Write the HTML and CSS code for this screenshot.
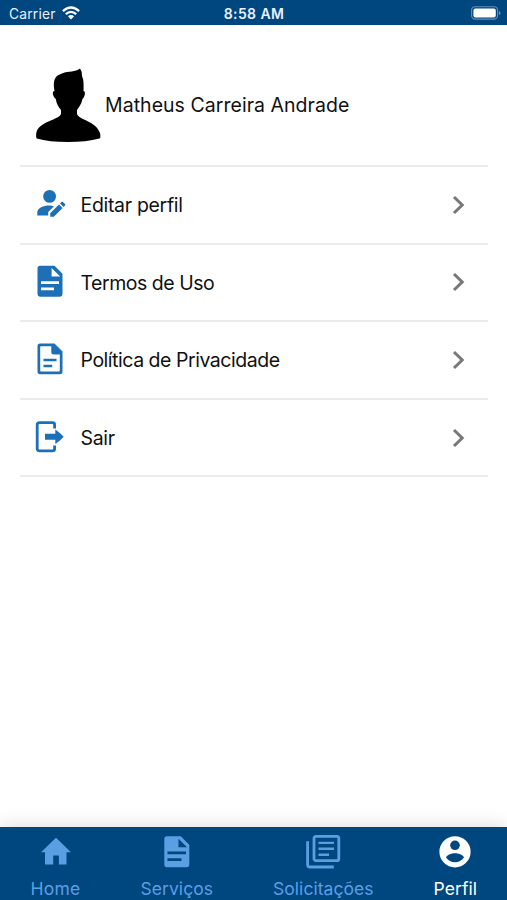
FILE: index.html
```html
<!DOCTYPE html>
<html lang="pt-BR">
<head>
<meta charset="utf-8">
<title>Perfil</title>
<link rel="stylesheet" href="styles.css">
</head>
<body>
<div class="app">
  <header class="status">
    <div class="carrier"><span>Carrier</span>
      <svg width="18" height="14" viewBox="0 0 18 14"><g fill="none" stroke="#fff" stroke-width="2.3"><path d="M.9 5.1Q9-2.2 17.1 5.1M3.8 8.2Q9 3.5 14.2 8.2"/></g><path fill="#fff" d="M5.9 10.2Q9 7.7 12.1 10.2L9 13.6z"/></svg>
    </div>
    <time class="clock">8:58 AM</time>
    <svg class="battery" width="30" height="14" viewBox="0 0 30 14"><rect x=".6" y=".7" width="26" height="12.4" rx="3.6" fill="none" stroke="#6590b5" stroke-width="1.1"/><rect x="2.4" y="2.4" width="22.4" height="9" rx="2" fill="#fff"/><path d="M28 4.7q3.2 2.3 0 4.6z" fill="#6590b5"/></svg>
  </header>
  <main class="content">
    <section class="profile">
      <svg class="avatar" width="66" height="76" viewBox="0 0 66 76"><path d="M19.500 24C17.500 13 20 8.500 27 6.500C34 3.500 40 5.500 45 1.500Q47.500 5 47 9C49 13 48.700 18 48.500 24C51 24 50 30 47.500 32C46.500 37 44 40 42 43V47C44 53 61 54 65 66Q66 71 64.500 71.500Q51 75 33 75Q14 75 1.800 71.500Q.5 70 1.500 65C5 54 24 53 26 47V43C23.500 40 21.500 37 20.800 32C18 30 16.500 24 19.500 24Z"/></svg>
      <h1 class="name">Matheus Carreira Andrade</h1>
    </section>
    <nav class="menu">
      <a class="row">
        <svg class="icon" viewBox="0 0 32 32"><circle cx="15.600" cy="8.400" r="6.400"/><path d="M3.300 27.500V24.300C3.300 20 9.500 17.500 15.500 17.500Q18 17.500 20 18.200L14.200 24V27.500zM16.200 28.800V25.200L25 16.400L28.600 20L19.800 28.800zM26 15.400L27.400 14Q28.200 13.200 29 14L31 16Q31.800 16.800 31 17.600L29.600 19z"/></svg>
        <span class="label">Editar perfil</span>
        <svg class="chevron" viewBox="0 0 14 20"><path d="M2 2L10.200 10L2 18"/></svg>
      </a>
      <a class="row">
        <svg class="icon" viewBox="0 0 32 32"><path fill-rule="evenodd" d="M6 -.3H20.500L28.500 7.700V27.700Q28.500 30.700 25.500 30.700H6.500Q3.500 30.700 3.500 27.700V2.200Q3.500 -.3 6 -.3zM17.600 1.900V10.400H26.200zM7 15.200V18H25V15.200zM7 21.500V24.300H20V21.500z"/></svg>
        <span class="label tight">Termos de Uso</span>
        <svg class="chevron" viewBox="0 0 14 20"><path d="M2 2L10.200 10L2 18"/></svg>
      </a>
      <a class="row">
        <svg class="icon" viewBox="0 0 32 32"><path fill-rule="evenodd" d="M6 .5H20.500L28.500 8.500V28.500Q28.500 31.200 26 31.200H6Q3.500 31.200 3.500 28.500V3Q3.500 .5 6 .5zM7 3.200Q6.200 3.200 6.200 4V27.500Q6.200 28.500 7 28.500H25Q25.800 28.500 25.800 27.500V11.500H20Q17.300 11.500 17.300 9V3.200z"/><path d="M9.500 15.700H22.500V18.300H9.500zM9.500 21.700H18.200V24.300H9.500z"/></svg>
        <span class="label tight">Política de Privacidade</span>
        <svg class="chevron" viewBox="0 0 14 20"><path d="M2 2L10.200 10L2 18"/></svg>
      </a>
      <a class="row">
        <svg class="icon" viewBox="0 0 32 32"><path d="M20.600 7.500V3.500Q20.600 1.700 18.500 1.700H5.500Q3.200 1.700 3.200 4V27.500Q3.200 29.800 5.500 29.800H18.500Q20.600 29.800 20.600 28V24.500" fill="none" stroke="#1d70b5" stroke-width="2.800"/><path d="M11 12.800H21.300V8.600Q26 11.800 29.700 15.800Q26 20 21.300 23V18.700H11z"/></svg>
        <span class="label">Sair</span>
        <svg class="chevron" viewBox="0 0 14 20"><path d="M2 2L10.200 10L2 18"/></svg>
      </a>
    </nav>
  </main>
  <nav class="tabs">
    <a class="tab home"><svg viewBox="0 0 36 36"><path d="M18 3.800L33 18.200H28.500V30.400H20.900V21.500H15.200V30.400H7V18.200H3z"/></svg><span>Home</span></a>
    <a class="tab services"><svg viewBox="0 0 36 36"><path fill-rule="evenodd" d="M8 2.200H21.800L30.300 10.700V30.500Q30.300 33.200 27.600 33.200H8Q5.300 33.200 5.300 30.500V5Q5.300 2.200 8 2.200zM19.500 4.700V13.200H28zM8.500 17.500V20.300H27V17.500zM8.500 24.300V27.100H22.500V24.300z"/></svg><span>Serviços</span></a>
    <a class="tab requests"><svg viewBox="0 0 36 36"><g fill="none" stroke="#5b9fe3" stroke-width="2.800"><rect x="9" y="2.300" width="24.800" height="24.400" rx="2"/><path d="M2.600 7.200V30.500Q2.600 33 5 33H28.800"/><path stroke-width="2.400" d="M13.500 8.900H29M13.500 14.800H29M13.500 20.700H24"/></g></svg><span>Solicitações</span></a>
    <a class="tab active"><svg viewBox="0 0 36 36"><circle cx="18" cy="17.800" r="15.600"/><g fill="#00467f"><circle cx="18" cy="11.300" r="4.800"/><path d="M9 23.200C10.500 20.500 15 19.300 18 19.300S25.500 20.500 27 23.200C25 26.500 21.500 28.200 18 28.200S11 26.500 9 23.200z"/></g></svg><span>Perfil</span></a>
  </nav>
</div>
</body>
</html>
```
FILE: styles.css
```css
* { box-sizing: border-box; }
body {
  margin: 0;
  background: #fff;
  color: #111;
  font-family: Inter, "Liberation Sans", sans-serif;
}
svg { display: block; flex: none; overflow: visible; }
.app {
  height: 900px;
  display: flex;
  flex-direction: column;
  overflow: hidden;
}
.status {
  height: 25px;
  flex: none;
  display: grid;
  grid-template-columns: 1fr auto 1fr;
  align-items: center;
  padding: 1px 6px 0 9px;
  background: #00467f;
  color: #e8f1f9;
}
.carrier {
  display: flex;
  align-items: center;
  gap: 6px;
  font-size: 13.8px;
  letter-spacing: 0.2px;
  line-height: 18px;
}
.carrier span { padding-top: 1px; }
.clock {
  font-size: 14px;
  font-weight: 600;
  letter-spacing: 0.4px;
  line-height: 18px;
  margin-right: 2px;
  padding-top: 1px;
}
.battery { justify-self: end; }
.content {
  flex: 1;
  padding: 0 19px 0 20px;
}
.profile {
  height: 142px;
  display: flex;
  align-items: center;
  padding: 18px 0 0 15px;
  border-bottom: 2px solid #ebebeb;
}
.avatar { margin-top: 2px; }
.name {
  margin: 2px 0 0 4px;
  font-size: 19.5px;
  letter-spacing: 0.04px;
  font-weight: 400;
  line-height: 26px;
  white-space: nowrap;
}
.row {
  height: 77.6px;
  display: flex;
  align-items: center;
  padding: 0 22px 1px 14px;
  border-bottom: 2px solid #ebebeb;
}
.icon {
  width: 32px;
  height: 32px;
  fill: #1d70b5;
}
.label {
  flex: 1;
  margin-left: 14.5px;
  padding-top: 2px;
  font-size: 19.5px;
  letter-spacing: -0.32px;
  line-height: 26px;
  white-space: nowrap;
}
.tight { letter-spacing: -0.47px; }
.chevron {
  width: 14px;
  height: 20px;
  margin-top: 1px;
  fill: none;
  stroke: #777;
  stroke-width: 3;
}
.tabs {
  height: 73px;
  flex: none;
  display: flex;
  justify-content: space-between;
  padding: 7px 30px 0 30.5px;
  background: #00467f;
  box-shadow: 0 -2px 16px rgba(0, 0, 0, 0.13);
}
.tab {
  display: flex;
  flex-direction: column;
  align-items: center;
  color: #5b9fe3;
  fill: #5b9fe3;
  font-size: 17.5px;
  letter-spacing: 0.05px;
  line-height: 22px;
}
.home { letter-spacing: 0.25px; }
.tab svg {
  width: 36px;
  height: 36px;
  margin-bottom: 8px;
}
.active {
  color: #fff;
  fill: #fff;
}
```
